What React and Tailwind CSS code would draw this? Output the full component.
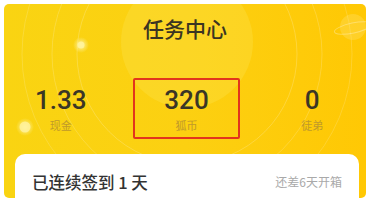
export default function App() {
  const stats = [
    { value: "1.33", label: "现金" },
    { value: "320", label: "狐币", active: true },
    { value: "0", label: "徒弟" },
  ];

  return (
    <div
      className="h-[211px] w-[371px] overflow-hidden bg-white pt-[4px]"
      style={{ fontFamily: '"Noto Sans CJK SC", "Noto Sans", sans-serif' }}
    >
      <div className="relative mx-[4px] h-[194px] w-[362px] overflow-hidden rounded-[5px] bg-gradient-to-r from-[#f9d412] via-[#fcd011] to-[#ffc804]">
        {/* decorative rings */}
        <svg className="absolute inset-0" width="362" height="194" viewBox="0 0 362 194">
          <defs>
            <radialGradient id="glow" cx="50%" cy="50%" r="50%">
              <stop offset="0%" stopColor="#fff7b0" stopOpacity="0.9" />
              <stop offset="100%" stopColor="#fff7b0" stopOpacity="0" />
            </radialGradient>
          </defs>
          <circle cx="183" cy="38" r="66" fill="#fde24a" opacity="0.35" />
          <circle cx="183" cy="50" r="110" fill="none" stroke="#fff" strokeOpacity="0.2" strokeWidth="1" />
          <circle cx="183" cy="50" r="135" fill="none" stroke="#fff" strokeOpacity="0.18" strokeWidth="1" />
          <circle cx="183" cy="50" r="165" fill="none" stroke="#fff" strokeOpacity="0.16" strokeWidth="1" />
          <circle cx="77" cy="41" r="8" fill="url(#glow)" />
          <circle cx="77" cy="41" r="3.5" fill="#fff3a0" opacity="0.85" />
          <circle cx="21" cy="123" r="9" fill="url(#glow)" />
          <circle cx="21" cy="123" r="5.5" fill="#fff3a0" opacity="0.8" />
          <circle cx="349" cy="23" r="13" fill="#ffe37a" opacity="0.3" />
          <ellipse cx="349" cy="24" rx="19" ry="5" fill="none" stroke="#fff" strokeOpacity="0.3" strokeWidth="1" transform="rotate(-12 349 24)" />
        </svg>

        <div className="relative flex flex-col">
          <h1 className="mt-[10px] text-center text-[21px] font-medium leading-[28px] text-[#3b3522]">
            任务中心
          </h1>

          <div className="mt-[36px] ml-[3px] flex gap-[18px]">
            {stats.map((s) => (
              <div
                key={s.label}
                className={
                  "flex h-[61px] w-[108px] flex-col items-center pt-[6px] " +
                  (s.active ? "rounded-[2px] border-2 border-[#e2351d]" : "border-2 border-transparent")
                }
              >
                <span
                  className="text-[26px] font-medium leading-[28px] text-[#3a3626]"
                  style={{ fontFamily: "Roboto, sans-serif" }}
                >
                  {s.value}
                </span>
                <span className="mt-[3px] text-[11px] leading-[16px] text-[#c09a2a]">{s.label}</span>
              </div>
            ))}
          </div>

          <div className="mt-[15px] ml-[11px] mr-[7px] flex h-[44px] items-start justify-between rounded-t-[10px] bg-white px-[17px] pt-[17px]">
            <span className="text-[16.5px] font-medium leading-[22px] text-[#333]">已连续签到 1 天</span>
            <span className="text-[12px] leading-[22px] text-[#a9a9a9]">还差6天开箱</span>
          </div>
        </div>
      </div>
    </div>
  );
}
